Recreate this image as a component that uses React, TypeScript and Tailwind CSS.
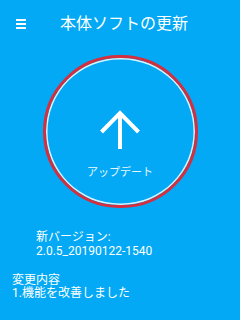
import React from 'react';

const font = "font-['Roboto','Noto_Sans_CJK_JP',sans-serif]";

const App: React.FC = () => {
  return (
    <div className={`w-[240px] h-[320px] bg-[#03a9f4] text-white overflow-hidden ${font}`}>
      {/* header */}
      <div className="flex items-center h-[42px] pt-[5px] pl-4">
        <div className="flex flex-col gap-[2px] w-[10px]">
          <div className="h-[2px] bg-white" />
          <div className="h-[2px] bg-white" />
          <div className="h-[2px] bg-white" />
        </div>
        <h1 className="ml-[34px] text-[16px] leading-[20px]">本体ソフトの更新</h1>
      </div>

      {/* update button */}
      <div className="mt-[13px] flex justify-center">
        <div className="w-[155px] h-[153px] rounded-full border-[3px] border-[#d32f3f] shadow-[inset_0_0_0_1.5px_#d8f4ff] flex flex-col items-center pt-[52px]">
          <svg width="40" height="40" viewBox="0 0 40 40" fill="none" stroke="white" strokeWidth="4">
            <path d="M1.5 22 L20 3 L38.5 22" />
            <path d="M20 4 V39" />
          </svg>
          <span className="mt-[16px] text-[11px] leading-[14px] text-[#e8f8ff]">アップデート</span>
        </div>
      </div>

      {/* version */}
      <div className="mt-[22px] pl-9 text-[12px] leading-[14px]">
        <p>新バージョン:</p>
        <p>2.0.5_20190122-1540</p>
      </div>

      <div className="mt-[16px] pl-3 text-[12px] leading-[13px]">
        <p>変更内容</p>
        <p>1.機能を改善しました</p>
      </div>
    </div>
  );
};

export default App;
